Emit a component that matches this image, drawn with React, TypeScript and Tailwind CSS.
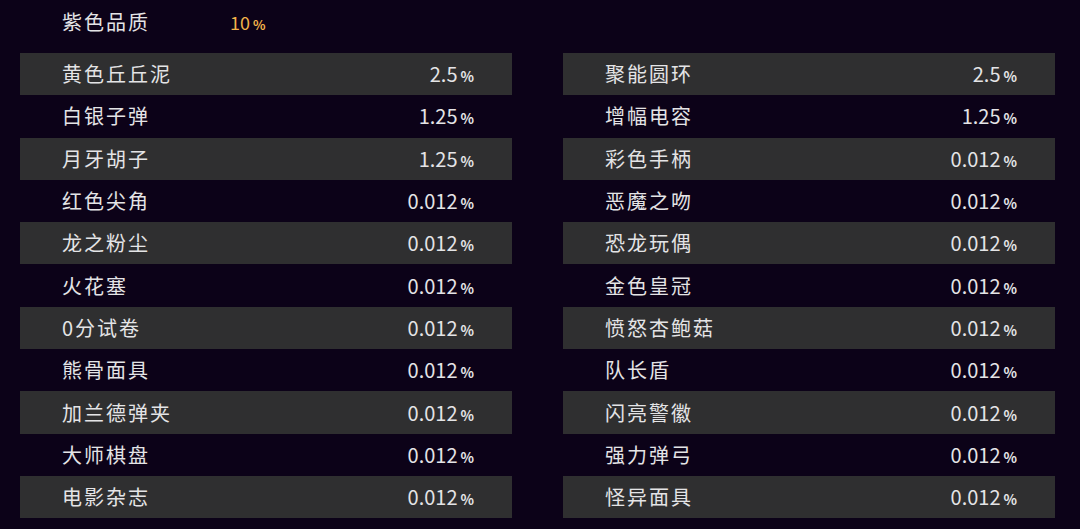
const left = [
  ["黄色丘丘泥", "2.5"],
  ["白银子弹", "1.25"],
  ["月牙胡子", "1.25"],
  ["红色尖角", "0.012"],
  ["龙之粉尘", "0.012"],
  ["火花塞", "0.012"],
  ["0分试卷", "0.012"],
  ["熊骨面具", "0.012"],
  ["加兰德弹夹", "0.012"],
  ["大师棋盘", "0.012"],
  ["电影杂志", "0.012"],
];

const right = [
  ["聚能圆环", "2.5"],
  ["增幅电容", "1.25"],
  ["彩色手柄", "0.012"],
  ["恶魔之吻", "0.012"],
  ["恐龙玩偶", "0.012"],
  ["金色皇冠", "0.012"],
  ["愤怒杏鲍菇", "0.012"],
  ["队长盾", "0.012"],
  ["闪亮警徽", "0.012"],
  ["强力弹弓", "0.012"],
  ["怪异面具", "0.012"],
];

const Pct = ({value}: {value: string}) => (
  <span className="flex items-baseline">
    {value}
    <span className="ml-[3px] text-[14px] font-bold">%</span>
  </span>
);

const Column = ({rows}: {rows: string[][]}) => (
  <div className="w-[492px] flex flex-col">
    {rows.map(([name, value], i) => (
      <div
        key={name}
        className={
          "h-[42.3px] flex items-center justify-between pl-[42px] pr-[38px] " +
          (i % 2 === 0 ? "bg-[#2f2f30]" : "")
        }
      >
        <span className="tracking-[2px]">{name}</span>
        <Pct value={value} />
      </div>
    ))}
  </div>
);

export default function App() {
  return (
    <div
      className="w-[1080px] h-[529px] bg-[#0c0218] text-[#e4e4e6] text-[20px] leading-none"
      style={{fontFamily: '"Noto Sans CJK SC", "Noto Sans", sans-serif'}}
    >
      <div className="h-[53px] flex items-center pl-[62px] pb-[9px]">
        <span className="w-[168px] tracking-[2px]">紫色品质</span>
        <span className="text-[#f2b34a] text-[18px] flex items-baseline">
          10<span className="ml-[3px] text-[13px] font-bold">%</span>
        </span>
      </div>
      <div className="flex gap-[51px] pl-[20px]">
        <Column rows={left} />
        <Column rows={right} />
      </div>
    </div>
  );
}
